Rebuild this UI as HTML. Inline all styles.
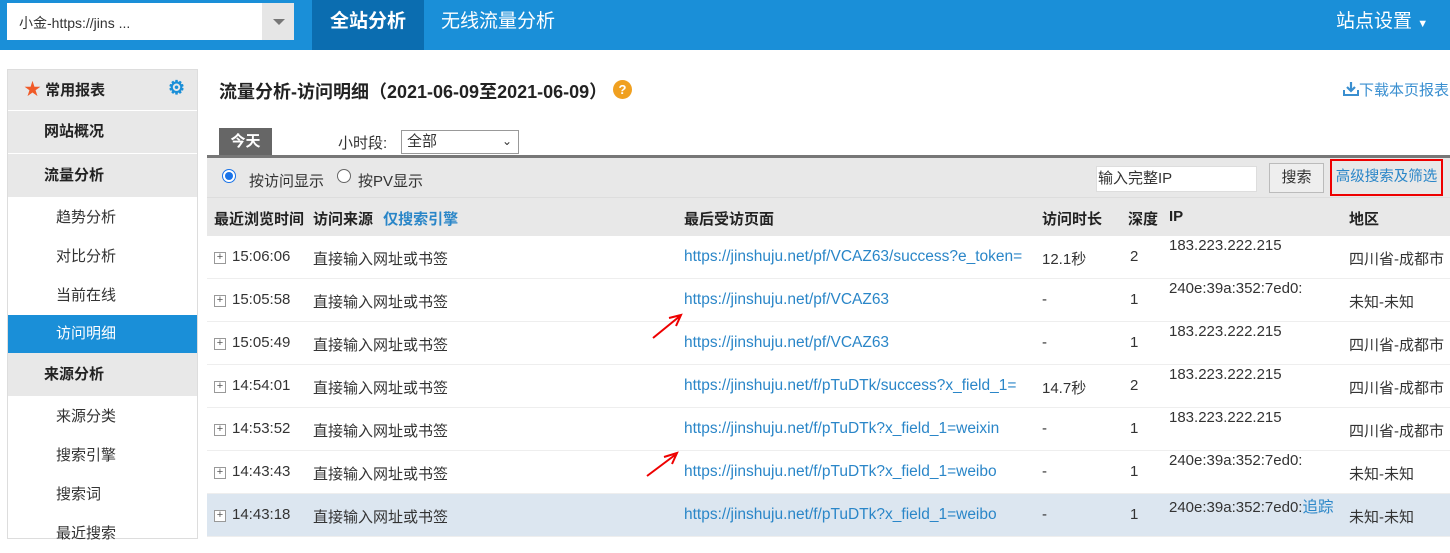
<!DOCTYPE html>
<html><head><meta charset="utf-8"><style>
*{margin:0;padding:0;box-sizing:border-box}
body{width:1450px;height:535px;overflow:hidden;background:#fff;font-family:"Liberation Sans","Noto Sans CJK SC",sans-serif;font-size:15px;color:#333;position:relative}
.abs{position:absolute}
.top{left:0;top:0;width:1450px;height:50px;background:#1a8fd8}
.sel{left:7px;top:3px;width:287px;height:37px;background:#fff}
.sel span{position:absolute;left:12px;top:10px;font-size:14px;color:#333}
.sel .dd{position:absolute;right:0;top:0;width:32px;height:37px;background:#e6e6e6}
.sel .dd:after{content:"";position:absolute;left:11px;top:16px;border:6px solid transparent;border-top:6px solid #777}
.tab1{left:312px;top:0;width:112px;height:50px;background:#0b6db0;color:#fff;font-size:19px;font-weight:bold;text-align:center;line-height:44px}
.tab2{left:441px;top:0;color:#fff;font-size:19px;line-height:44px}
.set{left:1336px;top:0;color:#fff;font-size:19px;line-height:44px}
.side{left:7px;top:69px;width:191px;height:470px;border:1px solid #ddd}
.si{position:absolute;left:0;width:189px;font-size:15px}
.g{background:#e8e8e8;font-weight:bold;color:#222;border-bottom:1px solid #fff}
.sub{color:#333}
.title{left:219px;top:78px;font-size:18px;font-weight:bold;color:#222}
.q{left:613px;top:80px;width:19px;height:19px;border-radius:50%;background:#f0a020;color:#fff;font-weight:bold;font-size:13px;text-align:center;line-height:19px}
.dl{left:1343px;top:79px;color:#3a8fd0;font-size:15px}
.today{left:219px;top:128px;width:53px;height:29px;background:#666;color:#fff;font-weight:bold;text-align:center;line-height:28px}
.hr{left:207px;top:155px;width:1243px;height:3px;background:#777}
.tool{left:207px;top:158px;width:1243px;height:40px;background:#e8e8e8;border-bottom:1px solid #ddd}
.thead{left:207px;top:198px;width:1243px;height:38px;background:#e8e8e8;font-weight:bold;color:#222}
.row{position:absolute;left:207px;width:1243px;height:43px;border-bottom:1px solid #eee;background:#fff}
.row div{position:absolute;top:12px;white-space:nowrap}
.row .ip{top:1px}
.lnk{color:#2a86c8}
.row .lnk{font-size:15.5px}
.plus{display:inline-block;width:12px;height:12px;border:1px solid #999;font-size:11px;line-height:9px;text-align:center;color:#555;margin-right:6px;vertical-align:1px}
</style></head><body>
<div class="abs top"></div>
<div class="abs sel"><span>小金-https://jins ...</span><div class="dd"></div></div>
<div class="abs tab1">全站分析</div>
<div class="abs tab2">无线流量分析</div>
<div class="abs set">站点设置 <span style="font-size:11px">▼</span></div>

<div class="abs side">
<div class="si g" style="top:0;height:41px;line-height:40px;padding-left:16px"><span style="color:#f05a28;font-size:17px">★</span> 常用报表<span style="position:absolute;right:12px;color:#1a8fd8;font-size:19px;top:-1px">⚙</span></div>
<div class="si g" style="top:41px;height:43px;line-height:42px;padding-left:36px">网站概况</div>
<div class="si g" style="top:84px;height:44px;line-height:43px;padding-left:36px">流量分析</div>
<div class="si sub" style="top:128px;height:39px;line-height:39px;padding-left:48px">趋势分析</div>
<div class="si sub" style="top:167px;height:39px;line-height:39px;padding-left:48px">对比分析</div>
<div class="si sub" style="top:206px;height:39px;line-height:39px;padding-left:48px">当前在线</div>
<div class="si" style="top:245px;height:38px;line-height:38px;padding-left:48px;background:#1a8fd8;color:#fff">访问明细</div>
<div class="si g" style="top:283px;height:44px;line-height:43px;padding-left:36px">来源分析</div>
<div class="si sub" style="top:327px;height:39px;line-height:39px;padding-left:48px">来源分类</div>
<div class="si sub" style="top:366px;height:39px;line-height:39px;padding-left:48px">搜索引擎</div>
<div class="si sub" style="top:405px;height:39px;line-height:39px;padding-left:48px">搜索词</div>
<div class="si sub" style="top:444px;height:39px;line-height:39px;padding-left:48px">最近搜索</div>
</div>

<div class="abs title">流量分析-访问明细（2021-06-09至2021-06-09）</div>
<div class="abs q">?</div>
<div class="abs dl"><svg width="16" height="16" viewBox="0 0 16 16" style="vertical-align:-2px"><path d="M1 9v5h14V9" fill="none" stroke="#3a8fd0" stroke-width="2"/><path d="M8 1v9M4 6l4 4 4-4" fill="none" stroke="#3a8fd0" stroke-width="2.2"/></svg>下载本页报表</div>
<div class="abs today">今天</div>
<div class="abs" style="left:338px;top:132px">小时段:</div>
<div class="abs" style="left:401px;top:130px;width:118px;height:24px;border:1px solid #999;background:#fff;padding-left:5px;line-height:22px">全部<span style="position:absolute;right:6px;top:-1px;font-size:12px">⌄</span></div>
<div class="abs hr"></div>
<div class="abs tool"></div>
<div class="abs" style="left:222px;top:169px;width:14px;height:14px;border-radius:50%;border:1px solid #1a73e8;background:#fff"><div style="margin:2px;width:8px;height:8px;border-radius:50%;background:#1a73e8"></div></div>
<div class="abs" style="left:249px;top:170px">按访问显示</div>
<div class="abs" style="left:337px;top:169px;width:14px;height:14px;border-radius:50%;border:1px solid #666;background:#fff"></div>
<div class="abs" style="left:358px;top:170px">按PV显示</div>
<div class="abs" style="left:1096px;top:166px;width:161px;height:26px;background:#fff;border:1px solid #ddd;padding-left:1px;line-height:24px">输入完整IP</div>
<div class="abs" style="left:1269px;top:163px;width:55px;height:30px;background:#eee;border:1px solid #bbb;text-align:center;line-height:28px">搜索</div>
<div class="abs" style="left:1330px;top:159px;width:113px;height:37px;border:2px solid #e00;color:#2a86c8;text-align:center;line-height:33px;font-size:14.5px">高级搜索及筛选</div>

<div class="abs thead">
<div class="abs" style="left:7px;top:10px">最近浏览时间</div>
<div class="abs" style="left:106px;top:10px">访问来源 <span class="lnk" style="margin-left:6px">仅搜索引擎</span></div>
<div class="abs" style="left:477px;top:10px">最后受访页面</div>
<div class="abs" style="left:835px;top:10px">访问时长</div>
<div class="abs" style="left:921px;top:10px">深度</div>
<div class="abs" style="left:962px;top:10px">IP</div>
<div class="abs" style="left:1142px;top:10px">地区</div>
</div>

<div class="row" style="top:236px"><div style="left:7px"><span class="plus">+</span>15:06:06</div><div style="left:106px">直接输入网址或书签</div><div class="lnk" style="left:477px">https://jinshuju.net/pf/VCAZ63/success?e_token=</div><div style="left:835px">12.1秒</div><div style="left:923px">2</div><div class="ip" style="left:962px">183.223.222.215</div><div style="left:1142px">四川省-成都市</div></div>
<div class="row" style="top:279px"><div style="left:7px"><span class="plus">+</span>15:05:58</div><div style="left:106px">直接输入网址或书签</div><div class="lnk" style="left:477px">https://jinshuju.net/pf/VCAZ63</div><div style="left:835px">-</div><div style="left:923px">1</div><div class="ip" style="left:962px">240e:39a:352:7ed0:</div><div style="left:1142px">未知-未知</div></div>
<div class="row" style="top:322px"><div style="left:7px"><span class="plus">+</span>15:05:49</div><div style="left:106px">直接输入网址或书签</div><div class="lnk" style="left:477px">https://jinshuju.net/pf/VCAZ63</div><div style="left:835px">-</div><div style="left:923px">1</div><div class="ip" style="left:962px">183.223.222.215</div><div style="left:1142px">四川省-成都市</div></div>
<div class="row" style="top:365px"><div style="left:7px"><span class="plus">+</span>14:54:01</div><div style="left:106px">直接输入网址或书签</div><div class="lnk" style="left:477px">https://jinshuju.net/f/pTuDTk/success?x_field_1=</div><div style="left:835px">14.7秒</div><div style="left:923px">2</div><div class="ip" style="left:962px">183.223.222.215</div><div style="left:1142px">四川省-成都市</div></div>
<div class="row" style="top:408px"><div style="left:7px"><span class="plus">+</span>14:53:52</div><div style="left:106px">直接输入网址或书签</div><div class="lnk" style="left:477px">https://jinshuju.net/f/pTuDTk?x_field_1=weixin</div><div style="left:835px">-</div><div style="left:923px">1</div><div class="ip" style="left:962px">183.223.222.215</div><div style="left:1142px">四川省-成都市</div></div>
<div class="row" style="top:451px"><div style="left:7px"><span class="plus">+</span>14:43:43</div><div style="left:106px">直接输入网址或书签</div><div class="lnk" style="left:477px">https://jinshuju.net/f/pTuDTk?x_field_1=weibo</div><div style="left:835px">-</div><div style="left:923px">1</div><div class="ip" style="left:962px">240e:39a:352:7ed0:</div><div style="left:1142px">未知-未知</div></div>
<div class="row" style="top:494px;background:#dce6f0"><div style="left:7px"><span class="plus" style="background:#fff">+</span>14:43:18</div><div style="left:106px">直接输入网址或书签</div><div class="lnk" style="left:477px">https://jinshuju.net/f/pTuDTk?x_field_1=weibo</div><div style="left:835px">-</div><div style="left:923px">1</div><div class="ip" style="left:962px">240e:39a:352:7ed0:<span class="lnk">追踪</span></div><div style="left:1142px">未知-未知</div></div>

<svg class="abs" style="left:640px;top:305px" width="50" height="40"><path d="M13 33L40 11M29 13L41 10L36 21" fill="none" stroke="#e00" stroke-width="2"/></svg>
<svg class="abs" style="left:640px;top:443px" width="50" height="40"><path d="M7 33L35 12M24 14L37 10L32 21" fill="none" stroke="#e00" stroke-width="2"/></svg>
</body></html>
